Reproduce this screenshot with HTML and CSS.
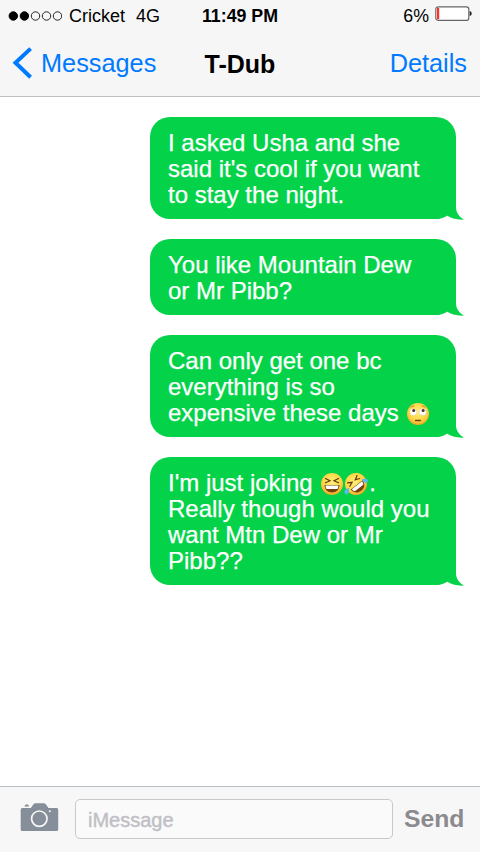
FILE: index.html
```html
<!DOCTYPE html>
<html lang="en">
<head>
<meta charset="utf-8">
<meta name="viewport" content="width=device-width">
<title>Messages</title>
<link rel="stylesheet" href="styles.css">
</head>
<body>
<svg class="defs" width="0" height="0" aria-hidden="true">
  <defs>
    <radialGradient id="face" cx=".5" cy=".4" r=".64">
      <stop offset="0" stop-color="#fff07a"/><stop offset=".65" stop-color="#fdd643"/><stop offset="1" stop-color="#ee9a1c"/>
    </radialGradient>
    <symbol id="tail" viewBox="0 0 30 24">
      <path d="M0 23C6 22.900 9.500 21.500 12 18.800C17 22.500 23 24 30 23.600C25.500 21 22 17 22 11V0H0Z" fill="#04d34a"/>
    </symbol>
  </defs>
</svg>
<div class="phone">
  <header class="top">
    <div class="status">
      <div class="carrier">
        <svg class="signal" width="54" height="12" viewBox="0 0 54 12">
          <g stroke="#000" stroke-width="1"><circle cx="5.300" cy="6" r="4.200"/><circle cx="16.400" cy="6" r="4.200"/></g>
          <g fill="none" stroke="#111" stroke-width=".9"><circle cx="27.500" cy="6" r="4.200"/><circle cx="38.500" cy="6" r="4.200"/><circle cx="49.500" cy="6" r="4.200"/></g>
        </svg>
        <span class="cricket">Cricket</span><span class="network">4G</span>
      </div>
      <div class="clock">11:49 PM</div>
      <div class="power">
        <span class="percent">6%</span>
        <svg width="37" height="16" viewBox="0 0 37 16">
          <rect x=".8" y=".8" width="33" height="13.600" rx="2.500" fill="#fff" stroke="#666" stroke-width="1.200"/>
          <rect x="2" y="2" width="2.200" height="11.200" fill="#ff3028"/>
          <path d="M34.700 5q2 .4 2 2.500t-2 2.500z" fill="#222"/>
        </svg>
      </div>
    </div>
    <nav class="nav">
      <div class="back">
        <svg width="20" height="32" viewBox="0 0 20 32"><path d="M18.600 1.600L3.500 15.800L18.600 30.200" fill="none" stroke="#007aff" stroke-width="4"/></svg>
        <span class="back-label">Messages</span>
      </div>
      <h1 class="title">T-Dub</h1>
      <div class="details">Details</div>
    </nav>
  </header>
  <main class="thread">
    <div class="bubble"><span>I asked Usha and she</span><br><span>said it's cool if you want</span><br><span>to stay the night.</span><svg class="tail"><use href="#tail"/></svg></div>
    <div class="bubble"><span>You like Mountain Dew</span><br><span>or Mr Pibb?</span><svg class="tail"><use href="#tail"/></svg></div>
    <div class="bubble"><span>Can only get one bc</span><br><span>everything is so</span><br><span>expensive these days </span><svg class="emoji" viewBox="0 0 24 24">
        <circle cx="12" cy="12" r="11" fill="url(#face)"/>
        <circle cx="7.300" cy="10" r="3.600" fill="#fff" stroke="#d9b78c" stroke-width=".4"/><circle cx="16.700" cy="10" r="3.600" fill="#fff" stroke="#d9b78c" stroke-width=".4"/>
        <circle cx="7.700" cy="8.500" r="1.500" fill="#413126"/><circle cx="17.100" cy="8.500" r="1.500" fill="#413126"/>
        <path d="M9.500 18.500h5" stroke="#704010" stroke-width="1.300" stroke-linecap="round"/><path d="M4.500 5.500Q6 3.700 8.500 4M15.500 4q2.500-.3 4 1.500" fill="none" stroke="#b96c12" stroke-width=".8"/>
      </svg><svg class="tail"><use href="#tail"/></svg></div>
    <div class="bubble"><span>I'm just joking </span><svg class="emoji" viewBox="0 0 24 24">
        <circle cx="12" cy="12" r="11" fill="url(#face)"/>
        <path d="M5.500 6.500l4.500 2.300l-4.500 2M18.500 6.500L14 8.800l4.500 2" fill="none" stroke="#65370d" stroke-width="1.200" stroke-linecap="round"/>
        <path d="M4.500 13h15c0 4.500-3 7.500-7.500 7.500S4.500 17.500 4.500 13z" fill="#77400f"/><path d="M5.500 13.500h13q0 2.500-1.200 3.500H6.700Q5.500 16 5.500 13.500z" fill="#fff"/>
      </svg><svg class="emoji laughing" viewBox="0 0 24 24">
        <g transform="rotate(-38 12 12)"><circle cx="12" cy="12" r="11" fill="url(#face)"/>
        <path d="M6 6l4 2.300l-4.300 1.700M18 6L14 8.300l4.300 1.700" fill="none" stroke="#65370d" stroke-width="1.200" stroke-linecap="round"/>
        <path d="M4.500 13h15c0 4.500-3 7.500-7.500 7.500S4.500 17.500 4.500 13z" fill="#77400f"/><path d="M5.500 13.500h13q0 2.500-1.200 3.500H6.700Q5.500 16 5.500 13.500z" fill="#fff"/></g>
        <path d="M5 16Q.5 16.500.4 20q0 2.500 2.300 2.400Q5.500 22 5 16zM17.800 7.500q5-1.500 6 .5q.7 2.500-1.500 3q-2.500.3-4.500-3.500z" fill="#59b9eb"/>
      </svg><span>.</span><br><span>Really though would you</span><br><span>want Mtn Dew or Mr</span><br><span>Pibb??</span><svg class="tail"><use href="#tail"/></svg></div>
  </main>
  <footer class="composer">
    <svg class="camera" width="39" height="29" viewBox="0 0 39 29">
      <path d="M2.200 5h8.600L13.500 1.300Q14.100.2 15.500.2h8.300q1.200 0 2 1.100L28.500 5h8.300Q38.200 5 38.200 6.500v20Q38.200 28 36.700 28H2.200Q.7 28 .7 26.500v-20Q.7 5 2.200 5z" fill="#868e99"/>
      <path d="M4.500 3.500Q5 1.500 6 1.500h1.500Q8.700 1.500 9 3.500z" fill="#868e99"/>
      <circle cx="19.300" cy="15.700" r="7.700" fill="none" stroke="#f7f7f7" stroke-width="1.700"/><circle cx="29.800" cy="8.300" r="1" fill="#f7f7f7"/>
    </svg>
    <div class="field"><span class="placeholder">iMessage</span></div>
    <div class="send">Send</div>
  </footer>
</div>
</body>
</html>
```
FILE: styles.css
```css
* { box-sizing: border-box; }
body { margin: 0; background: #fff; font-family: "Liberation Sans", Arial, sans-serif; }
svg { display: block; flex: none; }
.defs { position: absolute; }
.phone { width: 480px; height: 852px; display: flex; flex-direction: column; overflow: hidden; background: #fff; }
.top { height: 97px; background: #f6f6f6; border-bottom: 1px solid #c0c0c2; }
.status { height: 32px; display: grid; grid-template-columns: 1fr auto 1fr; align-items: center; font-size: 18px; line-height: 32px; white-space: nowrap; }
.carrier { display: flex; align-items: center; padding-left: 8px; }
.cricket { margin-left: 7px; }
.network { margin-left: 11px; }
.clock { font-weight: bold; font-size: 17.8px; }
.power { display: flex; justify-content: flex-end; gap: 6px; padding-right: 8px; }
.power svg { margin-top: 6px; }
.percent { font-size: 17.8px; }
.nav { height: 64px; display: grid; grid-template-columns: 1fr auto 1fr; line-height: 62px; white-space: nowrap; }
.back { display: flex; padding-left: 12px; color: #007aff; font-size: 25.3px; }
.back svg { margin-top: 15px; }
.back-label { margin-left: 9px; }
.title { margin: 0; font-size: 25px; font-weight: bold; line-height: 64px; }
.details { padding-right: 13px; text-align: right; color: #007aff; font-size: 25.3px; }
.thread { flex: 1; padding: 20px 24px 0 150px; display: flex; flex-direction: column; gap: 20px; }
.bubble { position: relative; padding: 13px 0 11px 18px; border-radius: 20px; background: #04d34a; color: #fff; font-size: 24px; line-height: 26px; white-space: pre; -webkit-text-stroke: .25px #fff; }
.tail { position: absolute; right: -8px; bottom: -1px; width: 30px; height: 24px; }
.emoji { display: inline-block; width: 24px; height: 24px; vertical-align: -4px; margin: -3px 0 -1px 1px; }
.laughing { margin-right: 1px; }
.emoji + .laughing { margin-left: 0; }
.composer { height: 66px; display: flex; border-top: 1px solid #b8c0c6; background: #f7f7f7; }
.camera { margin: 16px 0 0 20px; }
.field { width: 318px; height: 40px; margin: 12px 0 0 16px; padding-left: 12px; border: 1px solid #c9c9cc; border-radius: 5px; background: #fafafa; color: #bfbfc5; font-size: 20px; line-height: 41px; -webkit-text-stroke: .4px #bfbfc5; }
.send { margin-left: 11px; color: #8a8a8f; font-size: 24.700px; font-weight: bold; line-height: 63px; }
```
